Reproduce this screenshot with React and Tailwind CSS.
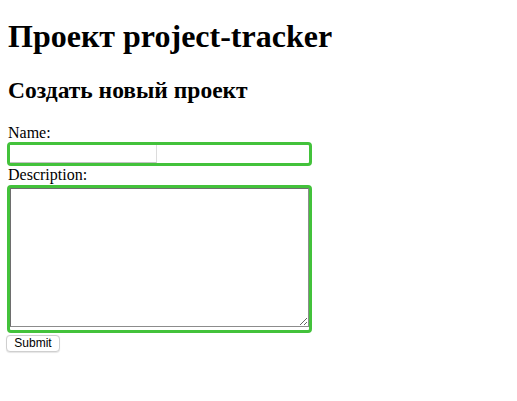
export default function App() {
  return (
    <div className="min-h-screen bg-white text-black font-['Liberation_Serif',serif] pl-[7px] pt-[18px] flex flex-col items-start">
      <h1 className="ml-px text-[32px] font-bold leading-[37px]">Проект project-tracker</h1>
      <h2 className="ml-px mt-[21px] text-[23.5px] font-bold leading-[28px]">Создать новый проект</h2>
      <form className="mt-[20px] flex flex-col items-start" onSubmit={(e) => e.preventDefault()}>
        <label className="ml-px text-[16px] leading-[18px]">Name:</label>
        <div className="w-[305px] h-[24px] border-[3px] border-[#43c23b] rounded-[4px] bg-white flex">
          <input className="w-[147px] h-[18px] border-0 border-r border-b border-r-[#dcdcdc] border-b-[#c2c2c2] outline-none bg-white" />
        </div>
        <label className="ml-px text-[16px] leading-[18px]">Description:</label>
        <div className="mt-px w-[305px] h-[148px] border-[3px] border-[#43c23b] rounded-[4px] bg-white flex flex-col">
          <textarea className="block w-full h-[139px] border border-[#8c8c8c] border-t-[#6e6e6e] border-l-[#6e6e6e] outline-none bg-white" />
        </div>
        <button type="submit" className="mt-[2px] -ml-px w-[54px] h-[17px] border border-[#cfcfcf] rounded-[4px] bg-white text-[12px] leading-[15px] font-['Liberation_Sans',sans-serif] text-black flex items-center justify-center shadow-[0_0.5px_1px_rgba(0,0,0,0.1)]">
          Submit
        </button>
      </form>
    </div>
  );
}
